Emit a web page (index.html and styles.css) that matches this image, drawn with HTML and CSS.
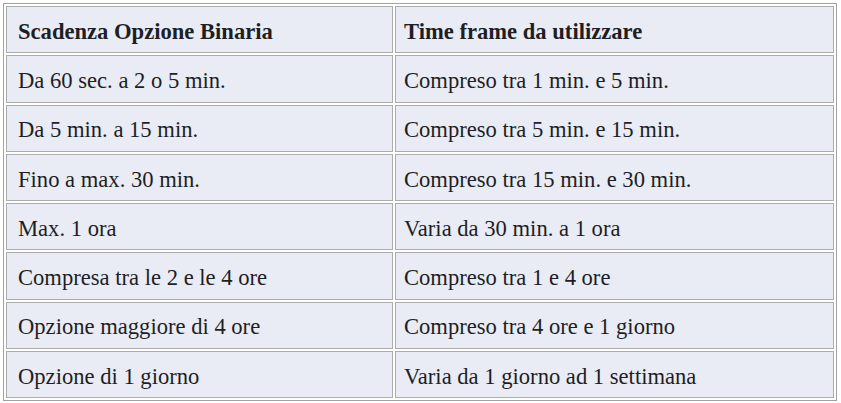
FILE: index.html
```html
<!DOCTYPE html>
<html lang="it">
<head>
<meta charset="utf-8">
<title>Scadenza Opzione Binaria</title>
<link rel="stylesheet" href="styles.css">
</head>
<body>
<table class="grid">
  <colgroup>
    <col class="c1">
    <col class="c2">
  </colgroup>
  <tr class="head"><td>Scadenza Opzione Binaria</td><td>Time frame da utilizzare</td></tr>
  <tr><td>Da 60 sec. a 2 o 5 min.</td><td>Compreso tra 1 min. e 5 min.</td></tr>
  <tr><td>Da 5 min. a 15 min.</td><td>Compreso tra 5 min. e 15 min.</td></tr>
  <tr><td>Fino a max. 30 min.</td><td>Compreso tra 15 min. e 30 min.</td></tr>
  <tr><td>Max. 1 ora</td><td>Varia da 30 min. a 1 ora</td></tr>
  <tr><td>Compresa tra le 2 e le 4 ore</td><td>Compreso tra 1 e 4 ore</td></tr>
  <tr><td>Opzione maggiore di 4 ore</td><td>Compreso tra 4 ore e 1 giorno</td></tr>
  <tr><td>Opzione di 1 giorno</td><td>Varia da 1 giorno ad 1 settimana</td></tr>
</table>
</body>
</html>
```
FILE: styles.css
```css
html, body {
  margin: 0;
  padding: 0;
  background: #ffffff;
}
body {
  padding: 3px 0 0 3px;
  font-family: "Liberation Serif", "Times New Roman", serif;
  font-size: 22.6px;
  color: #1e1e24;
}
.grid {
  width: 834px;
  table-layout: fixed;
  border-collapse: separate;
  border-spacing: 2px;
  border: 1px solid #a3a3a3;
  background: #ffffff;
}
.c1 { width: 387px; }
.c2 { width: 439px; }
.grid tr { height: 47.3px; }
.grid td {
  border: 1px solid #acacac;
  background: #e9ecf4;
  padding: 4px 10px 0 11px;
  vertical-align: middle;
  white-space: nowrap;
}
.grid td + td { padding-left: 8px; }
.head td { font-weight: bold; }
```
